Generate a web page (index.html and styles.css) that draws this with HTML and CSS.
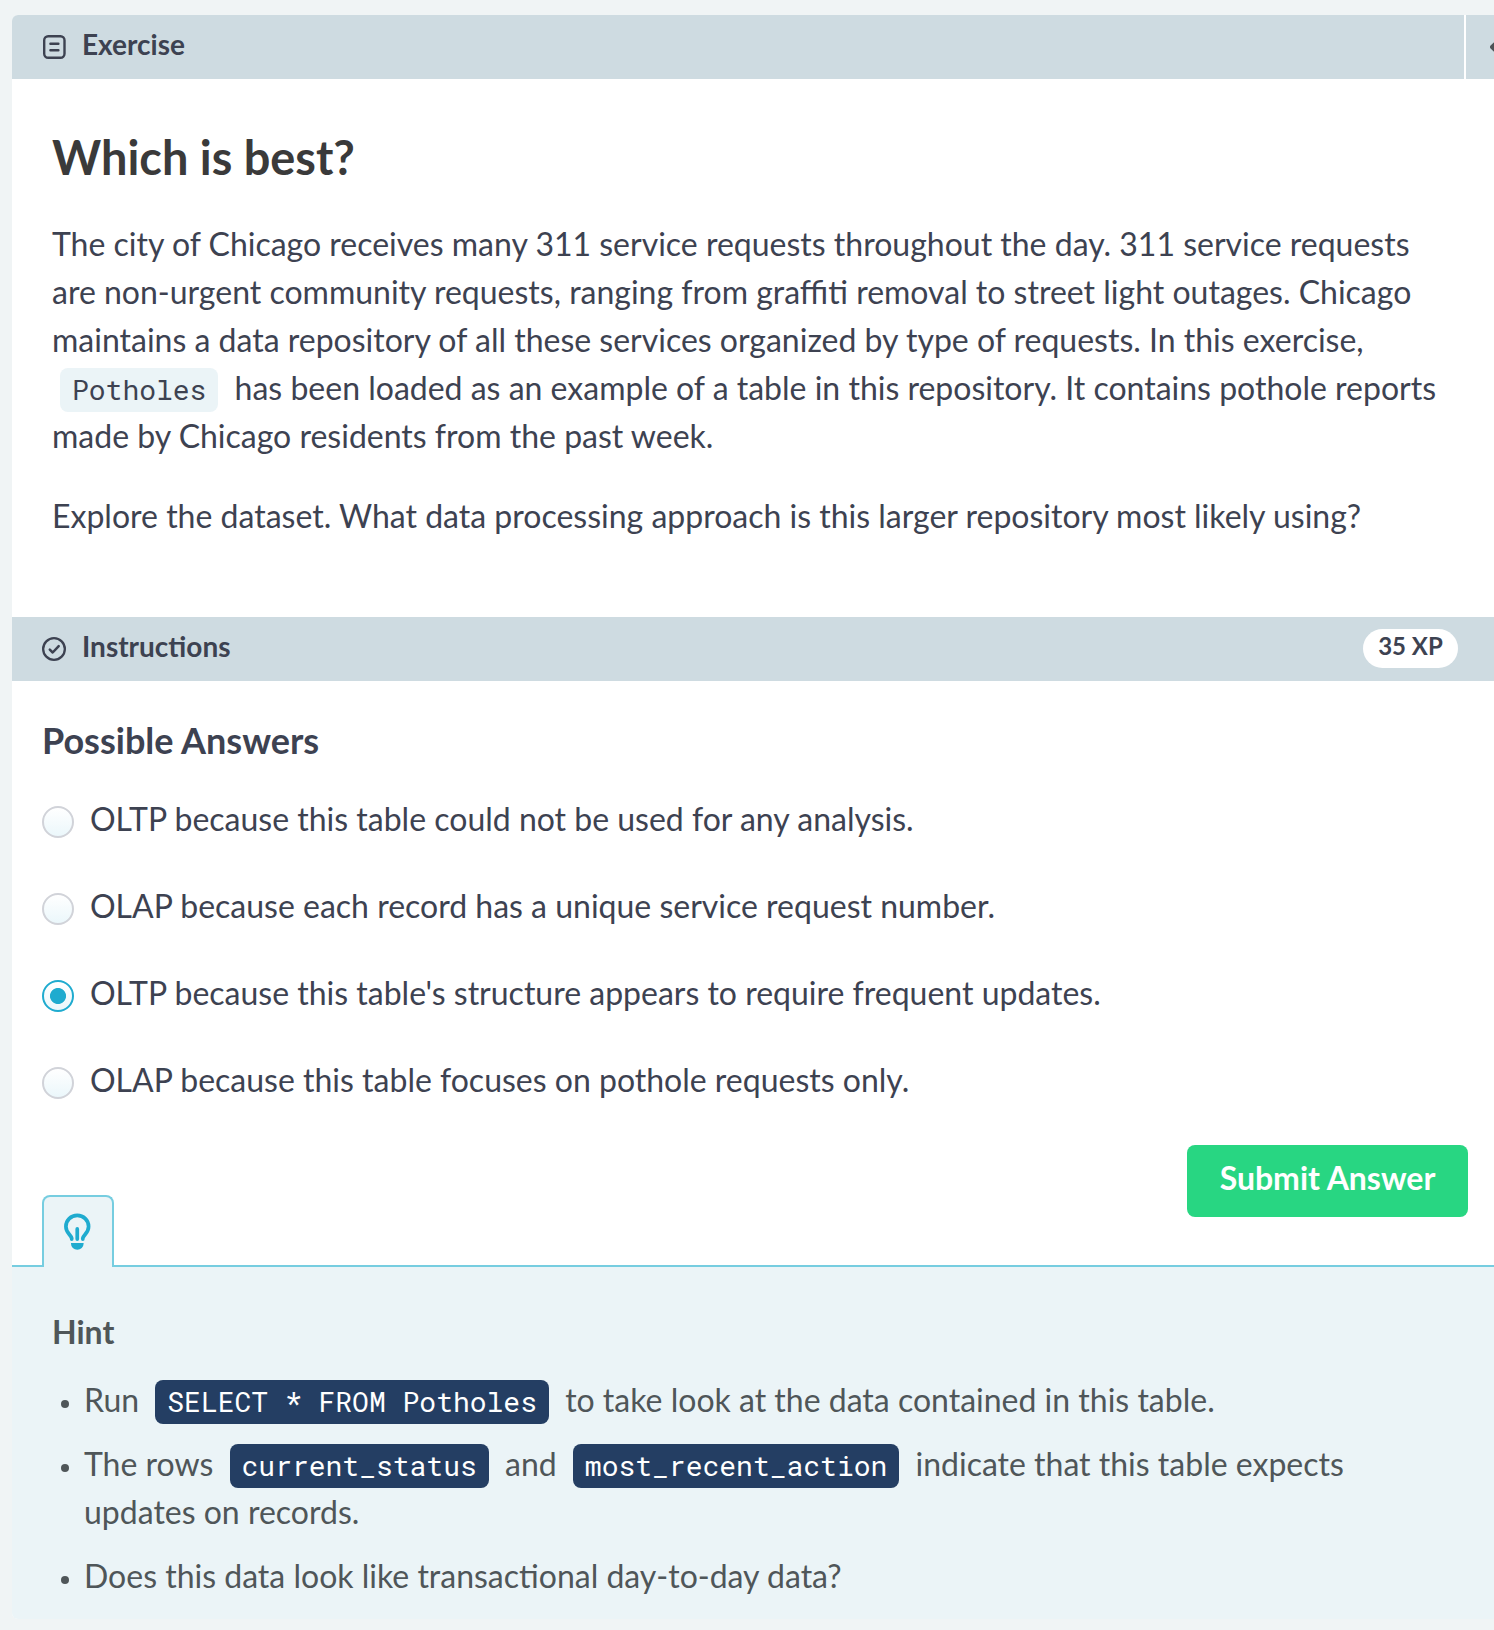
FILE: index.html
```html
<!DOCTYPE html>
<html lang="en">
<head>
<meta charset="utf-8">
<title>Exercise</title>
<link rel="stylesheet" href="styles.css">
</head>
<body>
<main class="panel">
  <header class="bar">
    <svg class="bar-icon" viewBox="0 0 24 24" fill="none" stroke="currentColor" stroke-width="2.400" stroke-linecap="round"><rect x="2.200" y="1.200" width="20.300" height="21.600" rx="4"/><path d="M8.400 8.800h8M8.400 15.300h8"/></svg>
    <span class="bar-title">Exercise</span>
    <button class="collapse" aria-label="Collapse"><svg width="16" height="24" viewBox="0 0 16 24" fill="none" stroke="#4d5356" stroke-width="4" stroke-linecap="round" stroke-linejoin="round"><path d="M11 3L2 12l9 9"/></svg></button>
  </header>
  <section class="exercise">
    <h1 class="title">Which is best?</h1>
    <p class="text">The city of Chicago receives many 311 service requests throughout the day. 311 service requests<br>are non-urgent community requests, ranging from graffiti removal to street light outages. Chicago<br>maintains a data repository of all these services organized by type of requests. In this exercise,<br><code class="code">Potholes</code> has been loaded as an example of a table in this repository. It contains pothole reports<br>made by Chicago residents from the past week.</p>
    <p class="text">Explore the dataset. What data processing approach is this larger repository most likely using?</p>
  </section>
  <header class="bar">
    <svg class="bar-icon" viewBox="0 0 24 24" fill="none" stroke="currentColor" stroke-width="2.300" stroke-linecap="round" stroke-linejoin="round"><circle cx="12" cy="12" r="10.850"/><path stroke-width="2.500" d="M7.800 12.700l2.900 2.800 6-6.400"/></svg>
    <span class="bar-title">Instructions</span>
    <span class="xp">35 XP</span>
  </header>
  <section class="answers">
    <h2 class="subtitle">Possible Answers</h2>
    <ul class="options">
      <li class="option"><span class="radio"></span><span>OLTP because this table could not be used for any analysis.</span></li>
      <li class="option"><span class="radio"></span><span>OLAP because each record has a unique service request number.</span></li>
      <li class="option"><span class="radio checked"></span><span>OLTP because this table's structure appears to require frequent updates.</span></li>
      <li class="option"><span class="radio"></span><span>OLAP because this table focuses on pothole requests only.</span></li>
    </ul>
    <div class="actions">
      <div class="tab"><svg width="27" height="38" viewBox="0 0 27 38" fill="none" stroke="#1fabcf" stroke-width="3.700"><path stroke-linecap="round" d="M7.700 26.100V25.200C6.700 21.600 1.900 19.800 1.900 13.400A11.350 11 0 0 1 24.600 13.400C24.600 19.800 19.800 21.600 18.800 25.200v.9M13.250 15.900v10.200"/><path fill="#1fabcf" stroke="none" d="M7 30h12.600v.8a6.300 6 0 0 1-12.600 0z"/></svg></div>
      <button class="submit">Submit Answer</button>
    </div>
  </section>
  <section class="hint">
    <h3 class="hint-title">Hint</h3>
    <ul class="hint-list">
      <li>Run <code class="code dark">SELECT * FROM Potholes</code> to take look at the data contained in this table.</li>
      <li>The rows <code class="code dark">current_status</code> and <code class="code dark">most_recent_action</code> indicate that this table expects<br>updates on records.</li>
      <li>Does this data look like transactional day-to-day data?</li>
    </ul>
  </section>
</main>
</body>
</html>
```
FILE: styles.css
```css
* { box-sizing: border-box; }
html, body { margin: 0; height: 1630px; overflow: hidden; }
body {
  background: #f0f4f5;
  color: #3d4251;
  font: 32px/48px Lato, "Liberation Sans", sans-serif;
  padding: 15px 0 0 12px;
}
h1, h2, h3, p, ul { margin: 0; padding: 0; }
ul { list-style: none; }
button { border: 0; font: inherit; }
.panel {
  display: flex;
  flex-direction: column;
  height: 1604px;
  background: #fff;
  border-radius: 6px 0 0 6px;
  overflow: hidden;
}
.bar {
  display: flex;
  align-items: center;
  flex: none;
  height: 64px;
  padding-left: 30px;
  background: #cedbe1;
}
.bar-icon { width: 24px; height: 24px; }
.bar-title {
  margin-left: 16px;
  padding-bottom: 6px;
  font-size: 28px;
  font-weight: 700;
}
.collapse {
  display: flex;
  align-items: center;
  width: 30px;
  height: 64px;
  margin-left: auto;
  padding: 0 0 0 24px;
  border-left: 2px solid #fff;
  background: none;
  overflow: hidden;
}
.collapse svg { flex: none; }
.exercise {
  flex: none;
  height: 538px;
  padding: 48px 0 0 40px;
}
.title {
  color: #3a3a3a;
  font-size: 46.9px;
  line-height: 60px;
  margin-bottom: 33px;
}
.text { margin-bottom: 32px; white-space: nowrap; }
.code {
  display: inline-block;
  height: 44px;
  margin: -6px 8px;
  padding: 0 12px;
  border-radius: 8px;
  background: #ebf4f7;
  font: 28px/44px "Roboto Mono", "DejaVu Sans Mono", monospace;
}
.code.dark { background: #243e63; color: #fff; }
.xp {
  height: 39px;
  width: 95px;
  margin: -1px 36px 0 auto;
  border-radius: 20px;
  background: #fff;
  font-size: 24px;
  font-weight: 700;
  line-height: 34px;
  text-align: center;
}
.answers {
  display: flex;
  flex-direction: column;
  flex: none;
  height: 586px;
  padding: 35px 26px 0 30px;
}
.subtitle { font-size: 36px; line-height: 48px; }
.options {
  display: flex;
  flex-direction: column;
  gap: 39px;
  margin-top: 31px;
}
.option { display: flex; gap: 16px; white-space: nowrap; }
.radio {
  flex: none;
  width: 32px;
  height: 32px;
  margin-top: 11px;
  border: 2px solid #d1d3d9;
  border-radius: 50%;
  background: linear-gradient(#fff, #ebf7fb);
}
.radio.checked {
  border-color: #1fabcf;
  background: radial-gradient(circle, #1fabcf 7.600px, transparent 8.400px), linear-gradient(#fff, #ebf7fb);
}
.actions {
  display: flex;
  justify-content: space-between;
  align-items: flex-start;
  margin-top: auto;
  height: 122px;
}
.tab {
  display: flex;
  align-self: flex-end;
  width: 72px;
  height: 72px;
  padding: 16px 0 0 20px;
  border: 2px solid #76cde0;
  border-bottom: 0;
  border-radius: 8px 8px 0 0;
  background: #ebf4f7;
  z-index: 1;
}
.submit {
  width: 281px;
  height: 72px;
  padding: 0 0 6px;
  border-radius: 8px;
  background: #28d682;
  color: #fff;
  font-weight: 700;
}
.hint {
  flex: 1;
  margin-top: -2px;
  padding: 41px 0 0 40px;
  border-top: 2px solid #76cde0;
  background: #ebf4f7;
  color: #4f5659;
}
.hint-title { font-size: 32px; line-height: 48px; }
.hint-list {
  display: flex;
  flex-direction: column;
  gap: 16px;
  margin-top: 20px;
  padding-left: 32px;
  white-space: nowrap;
}
.hint-list li { position: relative; }
.hint-list li::before {
  content: "";
  position: absolute;
  left: -23px;
  top: 24px;
  width: 8px;
  height: 8px;
  border-radius: 50%;
  background: currentColor;
}
```
